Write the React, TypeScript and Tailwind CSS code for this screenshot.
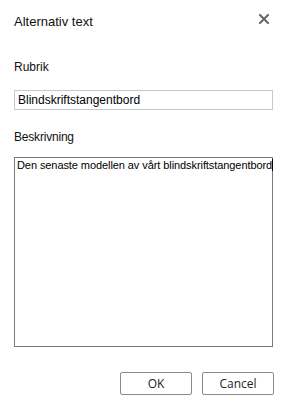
import React from "react";

export default function App() {
  return (
    <div className="w-[287px] h-[408px] bg-white px-[14px] flex flex-col" style={{ fontFamily: '"Liberation Sans", Arial, sans-serif' }}>
      <div className="flex justify-between items-start pt-[14px]">
        <div className="text-[13px] leading-[16px] text-[#111]">Alternativ text</div>
        <svg width="10" height="10" viewBox="0 0 10 10" className="mr-[4px]">
          <path d="M1 1 L9 9 M9 1 L1 9" stroke="#666666" strokeWidth="2" strokeLinecap="square" />
        </svg>
      </div>
      <div className="mt-[30px] text-[12px] leading-[14px] text-[#111]">Rubrik</div>
      <div className="mt-[16px] h-[20px] border border-[#c8c8c8] pl-[3px] text-[12px] leading-[18px] text-black whitespace-nowrap">
        Blindskriftstangentbord
      </div>
      <div className="mt-[20px] text-[12px] leading-[14px] tracking-[-0.2px] text-[#111]">Beskrivning</div>
      <div className="mt-[13px] h-[190px] border border-[#7a7a7a] pl-[2px] pt-[0px] text-[11px] leading-[14px] tracking-[-0.08px] text-black whitespace-nowrap flex items-start">
        <span>Den senaste modellen av vårt blindskriftstangentbord</span>
        <span className="inline-block w-[3px] h-[12px] mt-[1px] border-t border-b border-r border-black"></span>
        <span className="inline-block w-[1px] h-[12px] mt-[1px] bg-[#3b82f6]"></span>
      </div>
      <div className="mt-[25px] flex justify-end gap-[10px] mr-[-1px]">
        <button className="w-[72px] h-[23px] border border-[#8a8a8a] rounded-[2px] bg-white text-[12px] text-[#222] flex items-center justify-center" style={{ fontFamily: '"Open Sans", "Liberation Sans", sans-serif' }}>
          OK
        </button>
        <button className="w-[72px] h-[23px] border border-[#8a8a8a] rounded-[2px] bg-white text-[12px] text-[#222] flex items-center justify-center" style={{ fontFamily: '"Open Sans", "Liberation Sans", sans-serif' }}>
          Cancel
        </button>
      </div>
    </div>
  );
}
